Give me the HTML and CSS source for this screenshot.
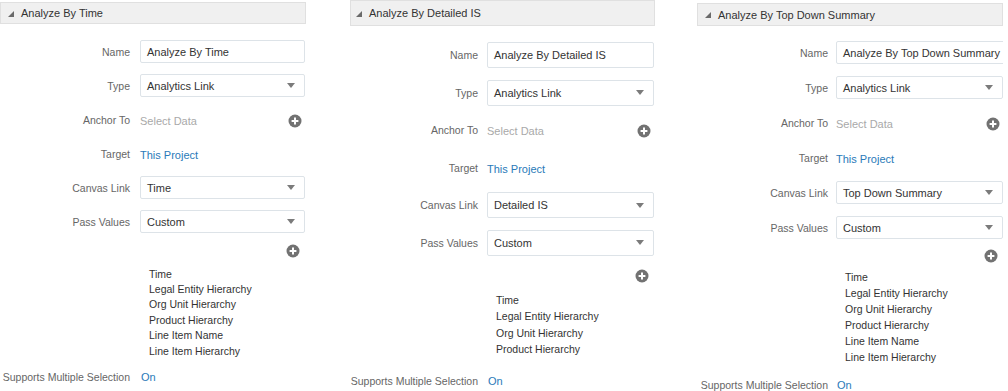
FILE: index.html
```html
<!DOCTYPE html>
<html lang="en">

<head>
  <meta charset="UTF-8">
  <meta name="viewport" content="width=device-width, initial-scale=1.0">
  <title>Analyze Actions</title>
  <link rel="stylesheet" href="styles.css">
</head>

<body>
  <div class="board">

    <!-- Analyze By Time -->
    <section class="panel panel-time">
      <div class="panel-head"><span class="caret"></span>Analyze By Time</div>
      <div class="form">
        <div class="row">
          <div class="label">Name</div>
          <div class="field input">Analyze By Time</div>
        </div>
        <div class="row">
          <div class="label">Type</div>
          <div class="field select">Analytics Link<span class="arrow"></span></div>
        </div>
        <div class="row">
          <div class="label">Anchor To</div>
          <div class="field plain placeholder">Select Data
            <svg class="plus" width="14" height="14" viewBox="0 0 14 14"><circle cx="7" cy="7" r="6.5" /><path d="M7 3.6v6.8M3.6 7h6.8" /></svg>
          </div>
        </div>
        <div class="row">
          <div class="label">Target</div>
          <div class="field plain link">This Project</div>
        </div>
        <div class="row">
          <div class="label">Canvas Link</div>
          <div class="field select">Time<span class="arrow"></span></div>
        </div>
        <div class="row">
          <div class="label">Pass Values</div>
          <div class="field select">Custom<span class="arrow"></span></div>
        </div>
        <div class="add-row">
          <svg class="plus" width="14" height="14" viewBox="0 0 14 14"><circle cx="7" cy="7" r="6.5" /><path d="M7 3.6v6.8M3.6 7h6.8" /></svg>
        </div>
        <ul class="values">
          <li>Time</li>
          <li>Legal Entity Hierarchy</li>
          <li>Org Unit Hierarchy</li>
          <li>Product Hierarchy</li>
          <li>Line Item Name</li>
          <li>Line Item Hierarchy</li>
        </ul>
        <div class="row last-row">
          <div class="label">Supports Multiple Selection</div>
          <div class="field plain link">On</div>
        </div>
      </div>
    </section>

    <!-- Analyze By Detailed IS -->
    <section class="panel panel-detail">
      <div class="panel-head"><span class="caret"></span>Analyze By Detailed IS</div>
      <div class="form">
        <div class="row">
          <div class="label">Name</div>
          <div class="field input">Analyze By Detailed IS</div>
        </div>
        <div class="row">
          <div class="label">Type</div>
          <div class="field select">Analytics Link<span class="arrow"></span></div>
        </div>
        <div class="row">
          <div class="label">Anchor To</div>
          <div class="field plain placeholder">Select Data
            <svg class="plus" width="14" height="14" viewBox="0 0 14 14"><circle cx="7" cy="7" r="6.5" /><path d="M7 3.6v6.8M3.6 7h6.8" /></svg>
          </div>
        </div>
        <div class="row">
          <div class="label">Target</div>
          <div class="field plain link">This Project</div>
        </div>
        <div class="row">
          <div class="label">Canvas Link</div>
          <div class="field select">Detailed IS<span class="arrow"></span></div>
        </div>
        <div class="row">
          <div class="label">Pass Values</div>
          <div class="field select">Custom<span class="arrow"></span></div>
        </div>
        <div class="add-row">
          <svg class="plus" width="14" height="14" viewBox="0 0 14 14"><circle cx="7" cy="7" r="6.5" /><path d="M7 3.6v6.8M3.6 7h6.8" /></svg>
        </div>
        <ul class="values">
          <li>Time</li>
          <li>Legal Entity Hierarchy</li>
          <li>Org Unit Hierarchy</li>
          <li>Product Hierarchy</li>
        </ul>
        <div class="row last-row">
          <div class="label">Supports Multiple Selection</div>
          <div class="field plain link">On</div>
        </div>
      </div>
    </section>

    <!-- Analyze By Top Down Summary -->
    <section class="panel panel-summary">
      <div class="panel-head"><span class="caret"></span>Analyze By Top Down Summary</div>
      <div class="form">
        <div class="row">
          <div class="label">Name</div>
          <div class="field input">Analyze By Top Down Summary</div>
        </div>
        <div class="row">
          <div class="label">Type</div>
          <div class="field select">Analytics Link<span class="arrow"></span></div>
        </div>
        <div class="row">
          <div class="label">Anchor To</div>
          <div class="field plain placeholder">Select Data
            <svg class="plus" width="14" height="14" viewBox="0 0 14 14"><circle cx="7" cy="7" r="6.5" /><path d="M7 3.6v6.8M3.6 7h6.8" /></svg>
          </div>
        </div>
        <div class="row">
          <div class="label">Target</div>
          <div class="field plain link">This Project</div>
        </div>
        <div class="row">
          <div class="label">Canvas Link</div>
          <div class="field select">Top Down Summary<span class="arrow"></span></div>
        </div>
        <div class="row">
          <div class="label">Pass Values</div>
          <div class="field select">Custom<span class="arrow"></span></div>
        </div>
        <div class="add-row">
          <svg class="plus" width="14" height="14" viewBox="0 0 14 14"><circle cx="7" cy="7" r="6.5" /><path d="M7 3.6v6.8M3.6 7h6.8" /></svg>
        </div>
        <ul class="values">
          <li>Time</li>
          <li>Legal Entity Hierarchy</li>
          <li>Org Unit Hierarchy</li>
          <li>Product Hierarchy</li>
          <li>Line Item Name</li>
          <li>Line Item Hierarchy</li>
        </ul>
        <div class="row last-row">
          <div class="label">Supports Multiple Selection</div>
          <div class="field plain link">On</div>
        </div>
      </div>
    </section>

  </div>
</body>

</html>
```

FILE: styles.css
```css
body {
  font-family: 'Liberation Sans', Arial, sans-serif;
  margin: 0;
  padding: 0;
  background: #fff;
  color: #333;
}

.board {
  display: flex;
  align-items: flex-start;
}

.panel {
  --top: 2px;
  --head: 22px;
  --form-top: 16px;
  --label: 130px;
  --cgap: 10px;
  --field: 165px;
  --row: 23px;
  --gap: 11px;
  --add-top: 11px;
  --list-top: 8.5px;
  --line: 15.4px;
  --last-top: 10px;
  flex: 0 0 auto;
  padding-top: var(--top);
  overflow: hidden;
  height: 391px;
  box-sizing: border-box;
}

.panel-time {
  width: 306px;
}

.panel-detail {
  --top: 0px;
  --head: 26px;
  --label: 128px;
  --cgap: 9px;
  --field: 167px;
  --row: 26px;
  --gap: 11.5px;
  --add-top: 13px;
  --list-top: 9.25px;
  --line: 16.5px;
  --last-top: 14.75px;
  width: 305px;
  margin-left: 44px;
}

.panel-summary {
  --top: 3px;
  --head: 23px;
  --form-top: 15px;
  --label: 131px;
  --cgap: 8px;
  --field: 167px;
  --gap: 12px;
  --add-top: 10px;
  --list-top: 6px;
  --line: 16px;
  --last-top: 11.5px;
  width: 306px;
  margin-left: 42px;
}

.panel-head {
  display: flex;
  align-items: center;
  height: var(--head);
  box-sizing: border-box;
  padding-left: 7px;
  background: #f0f0f0;
  border: 1px solid #e0e0e0;
  font-size: 11px;
  color: #333;
}

.panel-detail .panel-head {
  padding-left: 5px;
}

.caret {
  width: 0;
  height: 0;
  border-left: 6px solid transparent;
  border-bottom: 6px solid #6a6a6a;
  margin-right: 7px;
  margin-top: 1px;
}

.form {
  padding-top: var(--form-top);
}

.row {
  display: flex;
  align-items: center;
  height: var(--row);
  margin-top: var(--gap);
}

.row:first-child {
  margin-top: 0;
}

.label {
  flex: 0 0 var(--label);
  display: flex;
  justify-content: flex-end;
  white-space: nowrap;
  margin-right: var(--cgap);
  font-size: 10.5px;
  color: #666;
}

.field {
  flex: 0 0 var(--field);
  height: 100%;
  box-sizing: border-box;
  display: flex;
  align-items: center;
  font-size: 11px;
  white-space: nowrap;
}

.input,
.select {
  border: 1px solid #dde3e8;
  border-radius: 2px;
  padding: 0 6px;
  background: #fff;
  color: #333;
}

.select {
  justify-content: space-between;
}

.arrow {
  width: 0;
  height: 0;
  border-left: 4px solid transparent;
  border-right: 4px solid transparent;
  border-top: 5px solid #7b7b7b;
  margin-right: 3px;
}

.plain {
  padding-left: 0;
  padding-top: 2px;
}

.placeholder {
  justify-content: space-between;
  color: #a9a9a9;
}

.placeholder .plus {
  margin-right: 3px;
}

.link {
  color: #2a7ab9;
}

.plus circle {
  fill: #727272;
}

.plus path {
  stroke: #fff;
  stroke-width: 2;
}

.add-row {
  display: flex;
  justify-content: flex-end;
  height: 14px;
  width: calc(var(--label) + var(--cgap) + var(--field));
  margin-top: var(--add-top);
}

.add-row .plus {
  margin-right: 5px;
}

.values {
  list-style: none;
  margin: var(--list-top) 0 0 calc(var(--label) + var(--cgap) + 9px);
  padding: 0;
  font-size: 10.5px;
  line-height: var(--line);
  color: #333;
}

.last-row {
  height: 17px;
  margin-top: var(--last-top);
}

.last-row .field {
  padding-left: 1px;
  padding-top: 0;
}
```
